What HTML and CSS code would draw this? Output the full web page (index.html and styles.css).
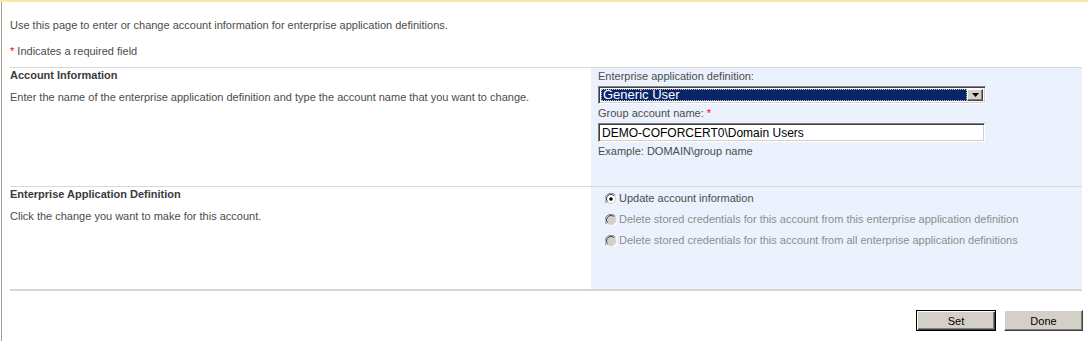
FILE: index.html
```html
<!DOCTYPE html>
<html>
<head>
<meta charset="utf-8">
<link rel="stylesheet" href="styles.css">
</head>
<body>
<div class="page">
  <div class="frame">
    <p class="intro">Use this page to enter or change account information for enterprise application definitions.</p>
    <p class="required"><span class="star">*</span> Indicates a required field</p>

    <div class="form">
      <div class="sec-left first">
        <div class="sec-title">Account Information</div>
        <div class="sec-desc">Enter the name of the enterprise application definition and type the account name that you want to change.</div>
      </div>
      <div class="sec-right first">
        <div class="label">Enterprise application definition:</div>
        <div class="select">
          <div class="select-value"><span class="focus">Generic User</span></div>
          <div class="select-btn">
            <svg width="7" height="4" viewBox="0 0 7 4"><path d="M0 0h7L3.5 4z" fill="#000"/></svg>
          </div>
        </div>
        <div class="label mt">Group account name: <span class="star">*</span></div>
        <input class="text" type="text" value="DEMO-COFORCERT0\Domain Users">
        <div class="label example">Example: DOMAIN\group name</div>
      </div>

      <div class="sec-left second">
        <div class="sec-title">Enterprise Application Definition</div>
        <div class="sec-desc">Click the change you want to make for this account.</div>
      </div>
      <div class="sec-right second">
        <div class="radios">
          <label class="radio">
            <svg class="rb" width="12" height="12" viewBox="0 0 12 12">
              <path d="M10.6 2.4A6 6 0 0 0 1.4 10.6" fill="none" stroke="#808080" stroke-width="1"/>
              <path d="M1.4 10.6A6 6 0 0 0 10.6 1.4" fill="none" stroke="#fff" stroke-width="1"/>
              <circle cx="6" cy="6" r="4.5" fill="#fff"/>
              <path d="M9.2 2.8A4.5 4.5 0 0 0 2.8 9.2" fill="none" stroke="#404040" stroke-width="1"/>
              <path d="M2.8 9.2A4.5 4.5 0 0 0 9.2 2.8" fill="none" stroke="#d4d0c8" stroke-width="1"/>
              <circle cx="6" cy="6" r="1.8" fill="#000"/>
            </svg>
            <span class="rl">Update account information</span>
          </label>
          <label class="radio disabled">
            <svg class="rb" width="12" height="12" viewBox="0 0 12 12">
              <path d="M10.6 2.4A6 6 0 0 0 1.4 10.6" fill="none" stroke="#808080" stroke-width="1"/>
              <path d="M1.4 10.6A6 6 0 0 0 10.6 1.4" fill="none" stroke="#fff" stroke-width="1"/>
              <circle cx="6" cy="6" r="4.5" fill="#d4d0c8"/>
              <path d="M9.2 2.8A4.5 4.5 0 0 0 2.8 9.2" fill="none" stroke="#404040" stroke-width="1"/>
              <path d="M2.8 9.2A4.5 4.5 0 0 0 9.2 2.8" fill="none" stroke="#d4d0c8" stroke-width="1"/>
            </svg>
            <span class="rl">Delete stored credentials for this account from this enterprise application definition</span>
          </label>
          <label class="radio disabled">
            <svg class="rb" width="12" height="12" viewBox="0 0 12 12">
              <path d="M10.6 2.4A6 6 0 0 0 1.4 10.6" fill="none" stroke="#808080" stroke-width="1"/>
              <path d="M1.4 10.6A6 6 0 0 0 10.6 1.4" fill="none" stroke="#fff" stroke-width="1"/>
              <circle cx="6" cy="6" r="4.5" fill="#d4d0c8"/>
              <path d="M9.2 2.8A4.5 4.5 0 0 0 2.8 9.2" fill="none" stroke="#404040" stroke-width="1"/>
              <path d="M2.8 9.2A4.5 4.5 0 0 0 9.2 2.8" fill="none" stroke="#d4d0c8" stroke-width="1"/>
            </svg>
            <span class="rl">Delete stored credentials for this account from all enterprise application definitions</span>
          </label>
        </div>
      </div>
    </div>

    <div class="footer">
      <button class="btn default">Set</button>
      <button class="btn last">Done</button>
    </div>
  </div>
</div>
</body>
</html>
```

FILE: styles.css
```css
html, body {
  margin: 0;
  padding: 0;
  background: #fff;
}
body {
  font-family: "Liberation Sans", Arial, sans-serif;
  font-size: 11px;
  color: #4c4c4c;
}
.page {
  border-top: 2px solid #fbe8a2;
  height: 339px;
}
.frame {
  margin-left: 1px;
  border-left: 1px solid #a8a097;
  padding-left: 8px;
  height: 339px;
  box-sizing: border-box;
  padding-top: 17px;
}
.intro {
  margin: 0;
  line-height: 13px;
}
.required {
  margin: 13px 0 0;
  line-height: 13px;
}
.star {
  color: #ff0000;
}
.form {
  margin-top: 9px;
  width: 1072px;
  display: grid;
  grid-template-columns: 581px 491px;
}
.sec-left, .sec-right {
  border-top: 1px solid #d8d8d8;
  box-sizing: border-box;
}
.sec-right {
  background: #ebf2fd;
  padding-left: 7px;
}
.first {
  height: 119px;
}
.second {
  height: 103px;
}
.sec-left {
  padding-top: 1px;
}
.sec-title {
  font-weight: bold;
  color: #3b3b3b;
  line-height: 13px;
}
.sec-desc {
  margin-top: 9px;
  line-height: 13px;
}
.sec-right.first {
  padding-top: 2px;
}
.label {
  line-height: 13px;
}
.label.mt {
  margin-top: 3px;
}
.select {
  margin-top: 3px;
  width: 388px;
  height: 18px;
  box-sizing: border-box;
  border-top: 1px solid #808080;
  border-left: 1px solid #808080;
  border-right: 1px solid #fff;
  border-bottom: 1px solid #fff;
  box-shadow: inset 1px 1px 0 #404040, inset -1px -1px 0 #d4d0c8;
  background: #fff;
  display: flex;
  padding: 2px;
}
.select-value {
  flex: 1;
  background: #0a246a;
  color: #fff;
  font-size: 13px;
  line-height: 12px;
  padding: 0;
  border: 1px dotted #c0c0c0;
  display: flex;
  align-items: center;
}
.focus {
  padding-left: 1px;
}
.select-btn {
  width: 16px;
  background: #d4d0c8;
  box-sizing: border-box;
  border-top: 1px solid #fff;
  border-left: 1px solid #fff;
  border-right: 1px solid #404040;
  border-bottom: 1px solid #404040;
  box-shadow: inset -1px -1px 0 #808080;
  display: flex;
  align-items: center;
  justify-content: center;
}
.text {
  display: block;
  margin: 3px 0 0;
  width: 387px;
  height: 19px;
  box-sizing: border-box;
  border-top: 1px solid #808080;
  border-left: 1px solid #808080;
  border-right: 1px solid #fff;
  border-bottom: 1px solid #fff;
  box-shadow: inset 1px 1px 0 #404040, inset -1px -1px 0 #d4d0c8;
  padding: 0 3px;
  font-family: "Liberation Sans", Arial, sans-serif;
  font-size: 12px;
  color: #000;
  background: #fff;
  outline: none;
}
.label.example {
  margin-top: 3px;
}
.sec-right.second {
  padding-top: 5px;
}
.radios {
  padding-left: 7px;
  display: flex;
  flex-direction: column;
  gap: 8px;
}
.radio {
  display: flex;
  align-items: center;
  gap: 2px;
  line-height: 13px;
}
.rb {
  display: block;
  flex: none;
}
.radio.disabled .rl {
  color: #8d8d8d;
}
.footer {
  width: 1072px;
  border-top: 2px solid #d6d6d6;
  display: flex;
  justify-content: flex-end;
  gap: 8px;
  padding-top: 19px;
}
.btn {
  width: 79px;
  height: 21px;
  background: #d4d0c8;
  font-family: "Liberation Sans", Arial, sans-serif;
  font-size: 11px;
  color: #000;
  border-top: 1px solid #fff;
  border-left: 1px solid #fff;
  border-right: 1px solid #404040;
  border-bottom: 1px solid #404040;
  box-shadow: inset -1px -1px 0 #808080;
  padding: 0;
  margin: 0;
}
.btn.last {
  margin-right: -1px;
}
.btn.default {
  width: 80px;
  border: 1px solid #000;
  box-shadow: inset 1px 1px 0 #fff, inset -1px -1px 0 #404040, inset -2px -2px 0 #808080;
}
```
